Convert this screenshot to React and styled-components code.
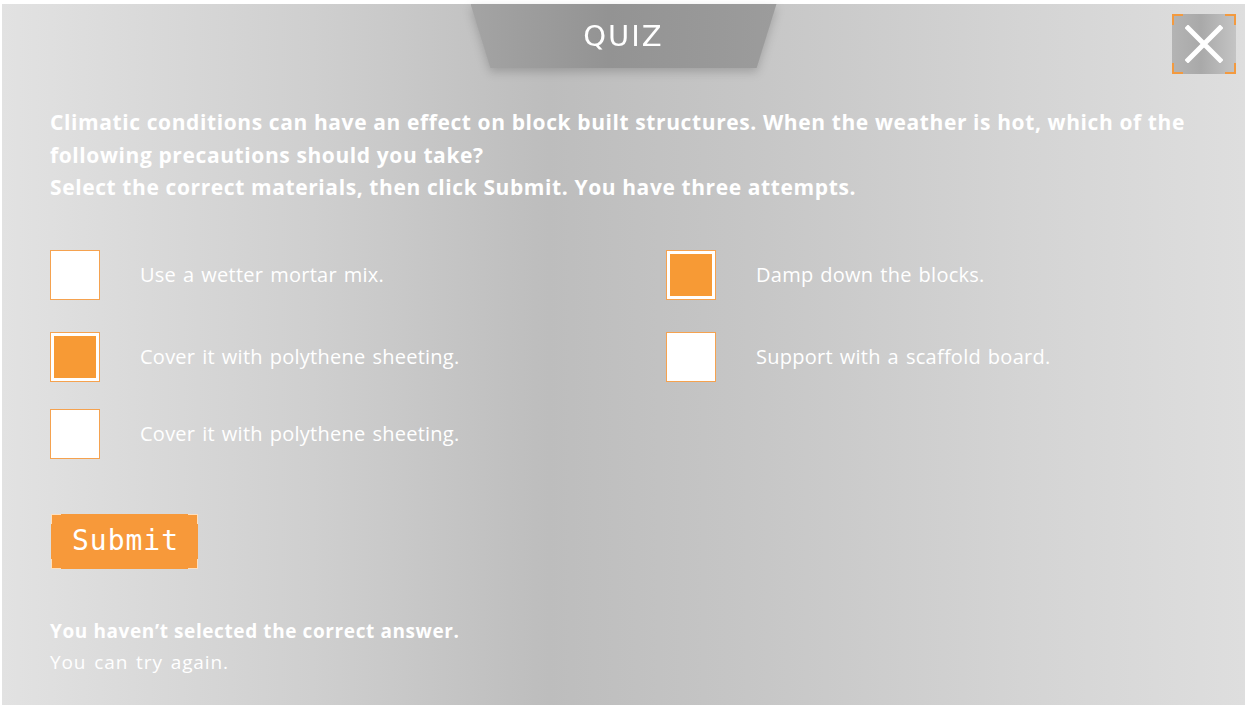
import React from "react";
import styled, { createGlobalStyle } from "styled-components";

const GlobalStyle = createGlobalStyle`
  html, body { margin: 0; padding: 0; background: #ffffff; }
  body { font-family: "Open Sans", "Noto Sans", sans-serif; }
  * { box-sizing: border-box; }
`;

const corners = (c, len, w) => `
  linear-gradient(${c}, ${c}) left top / ${len}px ${w}px no-repeat,
  linear-gradient(${c}, ${c}) left top / ${w}px ${len}px no-repeat,
  linear-gradient(${c}, ${c}) right top / ${len}px ${w}px no-repeat,
  linear-gradient(${c}, ${c}) right top / ${w}px ${len}px no-repeat,
  linear-gradient(${c}, ${c}) left bottom / ${len}px ${w}px no-repeat,
  linear-gradient(${c}, ${c}) left bottom / ${w}px ${len}px no-repeat,
  linear-gradient(${c}, ${c}) right bottom / ${len}px ${w}px no-repeat,
  linear-gradient(${c}, ${c}) right bottom / ${w}px ${len}px no-repeat`;

const Panel = styled.div`
  margin: 4px 2px 0 2px;
  height: 701px;
  background: linear-gradient(90deg, #e2e2e2 0%, #cfcfcf 25%, #bdbdbd 44%, #c6c6c6 60%, #d4d4d4 82%, #dedede 100%);
  display: flex;
  flex-direction: column;
  color: #ffffff;
`;

const Header = styled.div`
  display: grid;
  grid-template-columns: 1fr auto 1fr;
  height: 64px;
`;

const TabShadow = styled.div`
  grid-column: 2;
  filter: drop-shadow(0 4px 5px rgba(0, 0, 0, 0.18));
`;

const TitleTab = styled.div`
  width: 306px;
  height: 64px;
  clip-path: polygon(0 0, 100% 0, 93.5% 100%, 6.5% 100%);
  background: linear-gradient(90deg, #a4a4a4 0%, #939393 45%, #9c9c9c 100%);
  display: flex;
  align-items: center;
  justify-content: center;
  padding-bottom: 1px;
  font-family: "DejaVu Sans", sans-serif;
  font-size: 29px;
  letter-spacing: 2px;
  color: #ffffff;
`;

const CloseButton = styled.button`
  grid-column: 3;
  justify-self: end;
  align-self: start;
  margin: 10px 9px 0 0;
  width: 64px;
  height: 60px;
  border: none;
  padding: 0;
  display: flex;
  align-items: center;
  justify-content: center;
  background: ${corners("#f39a3f", 11, 2)},
    linear-gradient(90deg, #b4b4b4 0%, #a9a9a9 45%, #c4c4c4 100%);
`;

const Content = styled.div`
  padding: 38px 0 0 48px;
  display: flex;
  flex-direction: column;
`;

const Question = styled.p`
  margin: 0;
  font-size: 21px;
  font-weight: 700;
  line-height: 32.5px;
  letter-spacing: 0.6px;
  max-width: 1160px;
`;

const Options = styled.div`
  margin-top: 46px;
  display: grid;
  grid-template-columns: 616px 1fr;
  grid-template-rows: 82px 77px 50px;
  grid-auto-flow: column;
  align-items: start;
`;

const Option = styled.label`
  display: flex;
  align-items: center;
  gap: 40px;
  height: 50px;
  font-size: 20px;
  font-weight: 400;
  letter-spacing: 0.25px;
  word-spacing: 1.5px;
  cursor: pointer;
`;

const Box = styled.span`
  width: 50px;
  height: 50px;
  flex: none;
  border: 1px solid #f5a24f;
  background: #ffffff;
  padding: 3px;
  display: block;
  &::after {
    content: "";
    display: ${(p) => (p.$checked ? "block" : "none")};
    width: 100%;
    height: 100%;
    background: #f79a35;
  }
`;

const SubmitButton = styled.button`
  margin: 55px 0 0 1px;
  align-self: flex-start;
  width: 147px;
  height: 55px;
  border: none;
  padding: 0 0 2px 2px;
  font-family: "DejaVu Sans Mono", monospace;
  font-size: 28px;
  letter-spacing: 1px;
  color: #ffffff;
  background: ${corners("#fde0c0", 10, 1)}, #f7993a;
  cursor: pointer;
`;

const Feedback = styled.div`
  margin-top: 47px;
  font-size: 19px;
  line-height: 31px;
  letter-spacing: 0.6px;
  font-weight: 400;
`;

const FeedbackTitle = styled.div`
  font-weight: 700;
`;

const FeedbackHint = styled.div`
  letter-spacing: 0.9px;
  word-spacing: 2px;
`;

const options = [
  { text: "Use a wetter mortar mix.", checked: false },
  { text: "Cover it with polythene sheeting.", checked: true },
  { text: "Cover it with polythene sheeting.", checked: false },
  { text: "Damp down the blocks.", checked: true },
  { text: "Support with a scaffold board.", checked: false },
];

export default function App() {
  return (
    <>
      <GlobalStyle />
      <Panel>
        <Header>
          <TabShadow>
            <TitleTab>QUIZ</TitleTab>
          </TabShadow>
          <CloseButton aria-label="Close">
            <svg width="38" height="38" viewBox="0 0 38 38">
              <path d="M3 3 L35 35 M35 3 L3 35" stroke="#ffffff" strokeWidth="5" strokeLinecap="square" />
            </svg>
          </CloseButton>
        </Header>
        <Content>
          <Question>
            Climatic conditions can have an effect on block built structures. When the weather is hot, which of the
            following precautions should you take?
            <br />
            Select the correct materials, then click Submit. You have three attempts.
          </Question>
          <Options>
            {options.map((o, i) => (
              <Option key={i}>
                <Box $checked={o.checked} />
                {o.text}
              </Option>
            ))}
          </Options>
          <SubmitButton>Submit</SubmitButton>
          <Feedback>
            <FeedbackTitle>You haven’t selected the correct answer.</FeedbackTitle>
            <FeedbackHint>You can try again.</FeedbackHint>
          </Feedback>
        </Content>
      </Panel>
    </>
  );
}
